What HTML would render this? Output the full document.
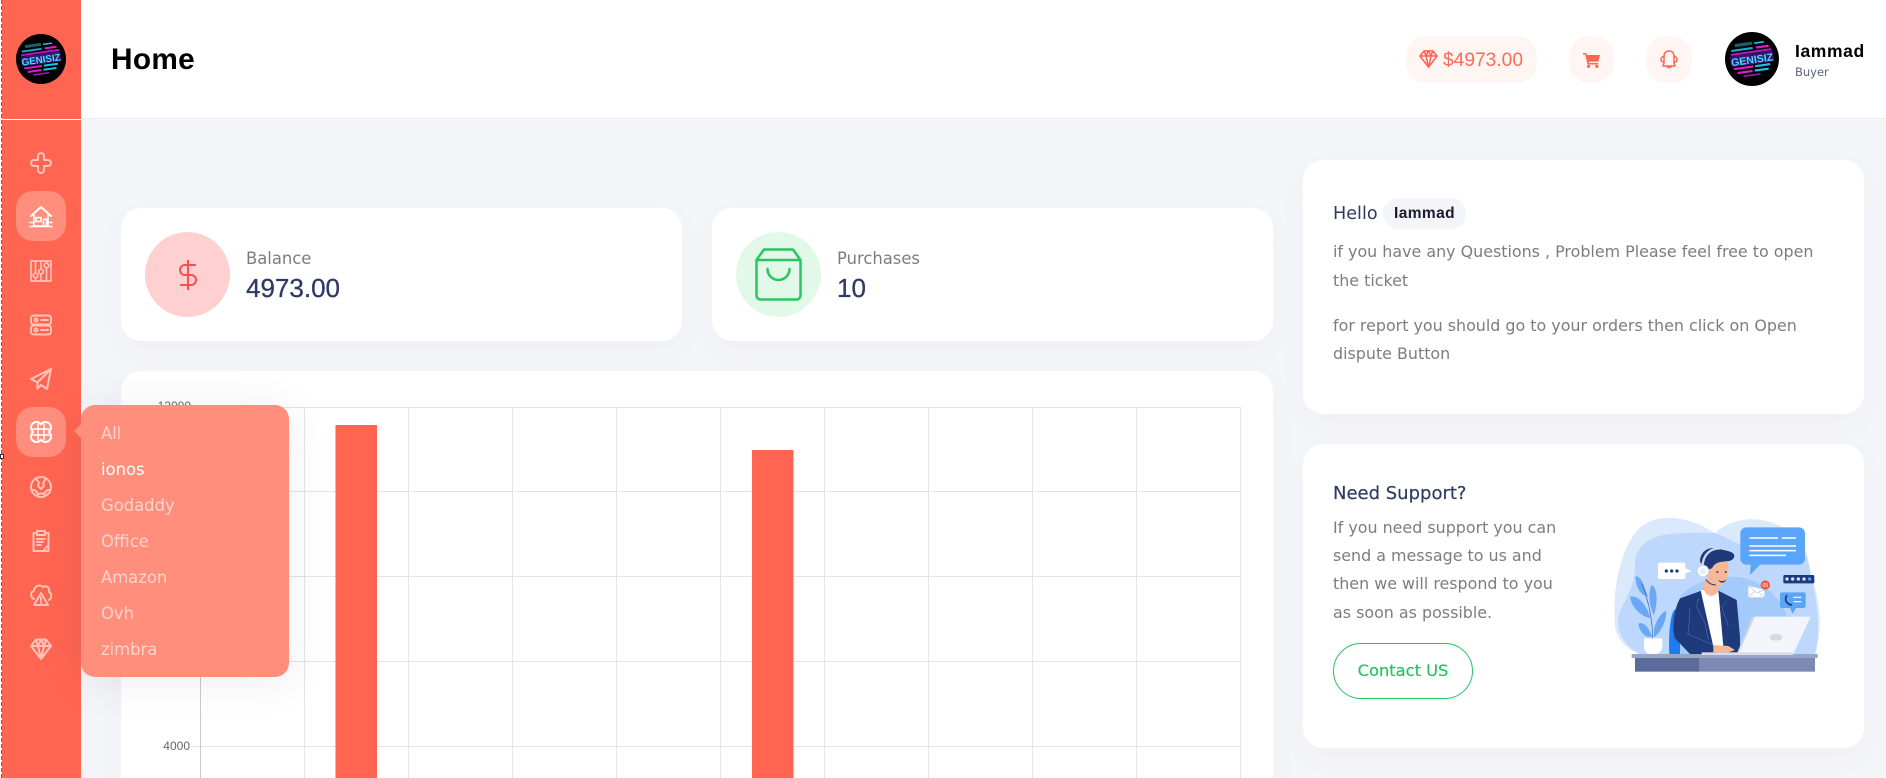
<!DOCTYPE html>
<html lang="en"><head><meta charset="utf-8"><title>Home</title>
<style>
*{box-sizing:border-box;margin:0;padding:0}
html,body{width:1886px;height:778px;overflow:hidden;background:#f4f5f9}
body{position:relative;font-family:"DejaVu Sans","Liberation Sans",sans-serif}
.a{position:absolute}
.t{position:absolute;white-space:nowrap}
.card{position:absolute;background:#fff;border-radius:20px;box-shadow:0 10px 30px rgba(82,63,105,.03)}
.ic{position:absolute;left:30px;width:22px;height:22px;fill:none;stroke:#ffc3ba;stroke-width:2;stroke-linejoin:round;stroke-linecap:round;overflow:visible}
.ic.on{stroke:#fff}
.m{position:absolute;left:101px;font-size:16.4px;line-height:20px;color:#ffd3cc;white-space:nowrap}
.b{font-size:15.9px;line-height:28px;color:#7d7d7d}
.y{font-family:"Liberation Sans",sans-serif}
</style></head><body>

<!-- left guide -->
<div class="a" style="left:0;top:0;width:2px;height:778px;background:#fff"></div>
<div class="a" style="left:1px;top:0;width:1px;height:778px;background:repeating-linear-gradient(#2a78d8 0 4px,#fff 4px 6px)"></div>

<!-- header -->
<div class="a" style="left:81px;top:0;width:1805px;height:119px;background:#fff;border-bottom:1px solid #eeeff3"></div>
<div class="t y" style="left:111px;top:39.500px;font-size:29.800px;line-height:40px;font-weight:700;color:#000;letter-spacing:.3px">Home</div>

<div class="a" style="left:1406px;top:36px;width:131px;height:47px;border-radius:20px;background:#fff5f3"></div>
<svg class="a" style="left:1419px;top:50px" width="19" height="18" viewBox="0 0 22 21" fill="none" stroke="#ff6550" stroke-width="1.800" stroke-linejoin="round"><path d="M6 1H16L21 7L11 20L1 7ZM1 7H21M6 1L8 7L11 20L14 7L16 1M8 7L11 1L14 7"/></svg>
<div class="t y" style="left:1443px;top:48px;font-size:19.200px;line-height:26px;color:#ff6b57">$4973.00</div>

<div class="a" style="left:1569px;top:36px;width:45px;height:47px;border-radius:20px;background:#fff5f3"></div>
<svg class="a" style="left:1583px;top:53px" width="17" height="15" viewBox="0 0 17 15"><path fill="#ff6550" d="M0 0H3.200L3.900 2H17L15.400 8.600H5.600L5.900 10H15.200V11.500H4.500L2.200 1.500H0Z"/><circle cx="5.600" cy="13.400" r="1.600" fill="#ff6550"/><circle cx="13.800" cy="13.400" r="1.600" fill="#ff6550"/></svg>

<div class="a" style="left:1646px;top:36px;width:46px;height:47px;border-radius:20px;background:#fff5f3"></div>
<svg class="a" style="left:1660px;top:50px" width="18" height="19" viewBox="0 0 18 19" fill="none" stroke="#ff6550" stroke-width="1.500" stroke-linecap="round" stroke-linejoin="round"><path d="M4 13V6.500C4 3 6 1 9 1s5 2 5 5.500V13l1 3H3Z"/><path d="M4 6.500C2 6.500 1 8 1 9.500S2 12 4 12M14 6.500c2 0 3 1.500 3 3S16 12 14 12M7 16.500c.5 1.500 3.500 1.500 4 0"/></svg>

<svg class="a" style="left:1725px;top:32px" width="54" height="54" viewBox="0 0 50 50"><circle cx="25" cy="25" r="25" fill="#000"/><g transform="rotate(-8 25 25)"><rect x="11" y="9" width="16" height="3" fill="#1f5e66"/><rect x="29" y="10" width="9" height="1.500" fill="#19c6ea"/><rect x="7" y="14" width="20" height="2" fill="#19a6ca"/><rect x="30" y="14" width="12" height="2" fill="#e01ad0"/><rect x="6" y="17.500" width="38" height="2" fill="#b514c8"/><rect x="5" y="20" width="40" height="10" fill="#3a1270"/><rect x="7" y="31" width="18" height="2" fill="#e01ad0"/><rect x="27" y="31" width="14" height="2" fill="#19c6ea"/><rect x="10" y="35" width="14" height="2" fill="#e01ad0"/><rect x="26" y="35" width="13" height="2" fill="#19c6ea"/><rect x="15" y="39" width="16" height="1.500" fill="#a01ac0"/><text x="25" y="29" text-anchor="middle" font-family="Liberation Sans,sans-serif" font-weight="700" font-size="9.800" fill="#3fe0ff">GENISIZ</text></g></svg>
<div class="t y" style="left:1795px;top:40px;font-size:17.500px;line-height:22px;font-weight:700;color:#000;letter-spacing:.6px">Iammad</div>
<div class="t" style="left:1795px;top:63px;font-size:11.500px;line-height:18px;color:#5d6280">Buyer</div>

<!-- sidebar -->
<div class="a" style="left:2px;top:0;width:79px;height:778px;background:#ff6550"></div>
<div class="a" style="left:2px;top:119px;width:79px;height:1px;background:#fff"></div>
<svg class="a" style="left:16px;top:34px" width="50" height="50" viewBox="0 0 50 50"><circle cx="25" cy="25" r="25" fill="#000"/><g transform="rotate(-8 25 25)"><rect x="11" y="9" width="16" height="3" fill="#1f5e66"/><rect x="29" y="10" width="9" height="1.500" fill="#19c6ea"/><rect x="7" y="14" width="20" height="2" fill="#19a6ca"/><rect x="30" y="14" width="12" height="2" fill="#e01ad0"/><rect x="6" y="17.500" width="38" height="2" fill="#b514c8"/><rect x="5" y="20" width="40" height="10" fill="#3a1270"/><rect x="7" y="31" width="18" height="2" fill="#e01ad0"/><rect x="27" y="31" width="14" height="2" fill="#19c6ea"/><rect x="10" y="35" width="14" height="2" fill="#e01ad0"/><rect x="26" y="35" width="13" height="2" fill="#19c6ea"/><rect x="15" y="39" width="16" height="1.500" fill="#a01ac0"/><text x="25" y="29" text-anchor="middle" font-family="Liberation Sans,sans-serif" font-weight="700" font-size="9.800" fill="#3fe0ff">GENISIZ</text></g></svg>

<svg class="ic" style="top:152px" viewBox="0 0 22 22"><path d="M8 4a3 3 0 0 1 6 0V8H18a3 3 0 0 1 0 6H14V18a3 3 0 0 1-6 0V14H4a3 3 0 0 1 0-6H8Z"/></svg>

<div class="a" style="left:16px;top:191px;width:50px;height:50px;border-radius:17px;background:#ff8e7d"></div>
<svg class="ic on" style="top:206px" viewBox="0 0 22 22"><path d="M1 10L11 1L21 10"/><path stroke-width="1.600" d="M4 9V20H18V9M6 11.500H11V15.500H6ZM13.500 20V13H16.500V20M0 20.500H22M0 16.500H3M19 16.500H22"/></svg>

<svg class="ic" style="top:260px;stroke-width:1.700" viewBox="0 0 22 22"><rect x="1" y="1" width="20" height="20"/><path d="M5.500 1V13M5.500 18V21M11 1V9M11 14V21M16.500 1V3M16.500 8V21"/><circle cx="5.500" cy="15.500" r="2.300"/><circle cx="11" cy="11.500" r="2.300"/><circle cx="16.500" cy="5.500" r="2.300"/></svg>

<svg class="ic" style="top:314px" viewBox="0 0 22 22"><rect x="1" y="1.500" width="20" height="9" rx="3"/><rect x="1" y="11.500" width="20" height="9" rx="3"/><circle cx="6" cy="6" r="1.500"/><circle cx="6" cy="16" r="1.500"/><path d="M11 6H18M11 16H18"/></svg>

<svg class="ic" style="top:368px" viewBox="0 0 22 22"><path d="M21 1L1 11L7.500 14.500L21 1L17 21L11 17L7.500 20.500V14.500"/></svg>

<div class="a" style="left:16px;top:407px;width:50px;height:50px;border-radius:17px;background:#ff8e7d"></div>
<svg class="ic on" style="top:421px" viewBox="0 0 22 22"><path d="M11 3.340A5.500 5.500 0 1 1 18.660 11A5.500 5.500 0 1 1 11 18.660A5.500 5.500 0 1 1 3.340 11A5.500 5.500 0 1 1 11 3.340Z"/><path stroke-width="1.500" d="M8 3V19M14 3V19M3 8H19M3 14H19"/></svg>

<svg class="ic" style="top:476px" viewBox="0 0 22 22"><circle cx="11" cy="11" r="10"/><path d="M6 2.500L9 7L8 10L11 13L14 10L13 7L16 2.500M2 14C5 13.500 7 16 8 18.500C10 17 12 17 14 18.500C15 16 17 13.500 20 14"/></svg>

<svg class="ic" style="top:530px" viewBox="0 0 22 22"><path d="M7 3H3.500V21H18.500V3H15M7 1H15V5H7ZM7 9H15M7 12H13M7 15H11M13 21L18.500 15"/></svg>

<svg class="ic" style="top:584px" viewBox="0 0 22 22"><path d="M4 15C0 13 0 8 4 7C4 2 10 0 13 3C17 1 20 4 19 8C22 9 22 14 19 16"/><path d="M11 9L4 21H18ZM11 13.500V16.500M11 18.500V19"/></svg>

<svg class="ic" style="top:638px" viewBox="0 0 22 22"><path d="M6 1.500H16L21 8L11 21L1 8ZM1 8H21M6 1.500L8 8L11 21L14 8L16 1.500M8 8L11 1.500L14 8"/></svg>

<!-- stat cards -->
<div class="card" style="left:121px;top:208px;width:561px;height:133px"></div>
<div class="a" style="left:145px;top:232px;width:85px;height:85px;border-radius:50%;background:#ffd0d0"></div>
<svg class="a" style="left:179px;top:260px" width="18" height="30" viewBox="0 0 18 30" fill="none" stroke="#ff4d4f" stroke-width="2"><path d="M9 0V30M17 5H6A5 5 0 0 0 6 15H12A5 5 0 0 1 12 25H1"/></svg>
<div class="t" style="left:246px;top:249px;font-size:16.400px;line-height:20px;color:#7d7d7d">Balance</div>
<div class="t y" style="left:246px;top:270px;font-size:26px;line-height:36px;color:#2f3a63;-webkit-text-stroke:.3px #2f3a63">4973.00</div>

<div class="card" style="left:712px;top:208px;width:561px;height:133px"></div>
<div class="a" style="left:736px;top:232px;width:85px;height:85px;border-radius:50%;background:#e2f8e8"></div>
<svg class="a" style="left:755px;top:248px" width="47" height="53" viewBox="0 0 47 53" fill="none" stroke="#2cc45e" stroke-width="2.500" stroke-linejoin="round" stroke-linecap="round"><path d="M1.500 12V47.500a4 4 0 0 0 4 4H41.500a4 4 0 0 0 4-4V12ZM1.500 12L9 1.500H38L45.500 12M12.500 21a11 11 0 0 0 22 0"/></svg>
<div class="t" style="left:837px;top:249px;font-size:16.400px;line-height:20px;color:#7d7d7d">Purchases</div>
<div class="t y" style="left:837px;top:270px;font-size:26px;line-height:36px;color:#2f3a63;-webkit-text-stroke:.3px #2f3a63">10</div>

<!-- chart -->
<div class="card" style="left:121px;top:371px;width:1152px;height:440px"></div>
<svg class="a" style="left:121px;top:371px" width="1152" height="407" viewBox="121 371 1152 407">
<g stroke="#e3e4e7" stroke-width="1">
<path d="M193 407.500H1240M193 491.500H1240M193 576.500H1240M193 661.500H1240M193 746.500H1240"/>
<path d="M304.500 407V778M408.500 407V778M512.500 407V778M616.500 407V778M720.500 407V778M824.500 407V778M928.500 407V778M1032.500 407V778M1136.500 407V778M1240.500 407V778"/>
</g>
<path d="M200.500 407V778" stroke="#c9cacd"/>
<rect x="335.500" y="425" width="41.500" height="353" fill="#ff6550"/>
<rect x="752" y="450" width="41.500" height="328" fill="#ff6550"/>
<text x="191" y="410" text-anchor="end" font-family="Liberation Sans,sans-serif" font-size="12" fill="#666">12000</text>
<text x="190" y="750" text-anchor="end" font-family="Liberation Sans,sans-serif" font-size="12" fill="#666">4000</text>
</svg>

<!-- popup -->
<div class="a" style="left:81px;top:405px;width:208px;height:272px;border-radius:14px;background:#ff8e7d;box-shadow:0 5px 40px rgba(82,63,105,.1)"></div>
<div class="a" style="left:74px;top:424px;width:0;height:0;border-top:7px solid transparent;border-bottom:7px solid transparent;border-right:7px solid #ff8e7d"></div>
<div class="m" style="top:424px">All</div>
<div class="m" style="top:460px;color:#fff">ionos</div>
<div class="m" style="top:496px">Godaddy</div>
<div class="m" style="top:532px">Office</div>
<div class="m" style="top:568px">Amazon</div>
<div class="m" style="top:604px">Ovh</div>
<div class="m" style="top:640px">zimbra</div>

<!-- hello card -->
<div class="card" style="left:1303px;top:160px;width:561px;height:254px"></div>
<div class="t" style="left:1333px;top:202px;font-size:17.600px;line-height:24px;color:#2f3a63">Hello</div>
<div class="a" style="left:1383px;top:198px;width:83px;height:31px;border-radius:16px;background:#f4f5f9"></div>
<div class="t y" style="left:1383px;width:83px;text-align:center;top:204px;font-size:15.500px;line-height:20px;font-weight:700;color:#1a1a2e;letter-spacing:.4px">Iammad</div>
<div class="t b" style="left:1333px;top:238px">if you have any Questions , Problem Please feel free to open</div>
<div class="t b" style="left:1333px;top:267px">the ticket</div>
<div class="t b" style="left:1333px;top:312px">for report you should go to your orders then click on Open</div>
<div class="t b" style="left:1333px;top:340px">dispute Button</div>

<!-- support card -->
<div class="card" style="left:1303px;top:444px;width:561px;height:304px"></div>
<div class="t" style="left:1333px;top:482px;font-size:18px;line-height:24px;color:#2f3a63;-webkit-text-stroke:.2px #2f3a63">Need Support?</div>
<div class="t b" style="left:1333px;top:514px">If you need support you can</div>
<div class="t b" style="left:1333px;top:542px">send a message to us and</div>
<div class="t b" style="left:1333px;top:570px">then we will respond to you</div>
<div class="t b" style="left:1333px;top:599px">as soon as possible.</div>
<div class="a" style="left:1333px;top:643px;width:140px;height:56px;border:1px solid #22c55e;border-radius:28px;background:#fff"></div>
<div class="t" style="left:1333px;width:140px;text-align:center;top:660px;font-size:16.300px;line-height:22px;color:#22c55e;-webkit-text-stroke:.2px #22c55e">Contact US</div>

<!-- illustration -->
<svg class="a" style="left:1580px;top:490px" width="260" height="200" viewBox="0 0 780 600">
<path fill="#dbe9fd" d="M105 400C95 300 125 150 190 105C250 65 340 85 405 130C450 85 540 70 610 115C680 160 690 210 690 250C720 320 730 420 705 492H175C130 470 105 440 105 400Z"/>
<path fill="#bdd8fc" d="M165 215C170 160 225 130 300 130C350 128 390 125 415 132C470 160 500 175 560 180L680 200C700 280 730 400 705 492H180C130 470 110 420 115 380C125 340 170 290 165 215Z"/>
<path fill="#a4cafb" d="M300 320C340 270 430 250 500 265C560 285 610 330 625 392L640 492H300Z"/>
<path fill="#5aa5f9" d="M500 112H657a18 18 0 0 1 18 18V206a18 18 0 0 1-18 18H540L510 255L512 224H499a18 18 0 0 1-18-18V130a18 18 0 0 1 18-18Z"/>
<path stroke="#fff" stroke-width="4.500" fill="none" d="M508 144H594M605 144H648M508 168H648M508 182H648M508 196H618"/>
<path fill="#fff" d="M240 218H310a6 6 0 0 1 6 6V235L335 243L316 250V261a6 6 0 0 1-6 6H240a6 6 0 0 1-6-6V224a6 6 0 0 1 6-6Z"/>
<circle cx="259" cy="243" r="5" fill="#1f3a7a"/><circle cx="275" cy="243" r="5" fill="#1f3a7a"/><circle cx="291" cy="243" r="5" fill="#1f3a7a"/>
<rect x="610" y="255" width="93" height="25" rx="4" fill="#1f3a7a"/>
<g fill="#d8e6fb"><circle cx="621" cy="267" r="5"/><circle cx="638" cy="267" r="5"/><circle cx="655" cy="267" r="5"/><circle cx="672" cy="267" r="5"/></g><circle cx="689" cy="267" r="5" fill="#5aa5f9"/>
<path fill="#5aa5f9" d="M606 307H671a6 6 0 0 1 6 6V348a6 6 0 0 1-6 6H648L638 371L630 354H606a6 6 0 0 1-6-6V313a6 6 0 0 1 6-6Z"/>
<path stroke="#1f3a7a" stroke-width="5" fill="none" stroke-linecap="round" d="M620 317C612 330 620 342 634 345"/>
<path stroke="#fff" stroke-width="3.500" fill="none" d="M640 322H664M640 335H664"/>
<path fill="#fff" d="M505 287L553 300V322H505Z"/><path stroke="#b9c7dd" stroke-width="2" fill="none" d="M505 287L530 308L553 300M505 322L524 304M553 322L535 306"/>
<circle cx="556" cy="285" r="14" fill="#ef5a3c"/><text x="556" y="291" text-anchor="middle" font-size="15" font-family="Liberation Sans,sans-serif" fill="#fff">05</text>
<!-- plant -->
<g fill="#6aa8f5">
<path d="M167 258C190 262 192 295 205 320C192 320 165 300 167 258Z"/>
<path d="M150 320C175 315 200 345 212 385C185 380 155 355 150 320Z"/>
<path d="M215 285C235 295 232 345 222 375C205 345 205 305 215 285Z"/>
<path d="M175 400C195 395 210 420 216 440C195 445 178 425 175 400Z"/>
<path d="M258 362C262 390 240 430 222 442C218 410 235 375 258 362Z"/>
</g>
<path stroke="#3b5fa8" stroke-width="2" fill="none" d="M185 280C205 330 218 390 218 445"/>
<path fill="#fff" d="M192 445H247V470C245 485 235 492 225 492H212C200 492 193 485 192 470Z"/>
<!-- chair / body -->
<path fill="#1e7cf0" d="M285 358C270 370 265 440 268 492H300V358Z"/>
<path fill="#1f3a7a" d="M370 300L300 325C280 360 275 420 285 445L330 492H480L480 440L470 330L415 302Z"/>
<path fill="#fff" d="M362 300L415 302L430 470H400C385 400 370 340 362 300Z"/>
<path fill="#f8b898" d="M372 270L415 275L415 305C400 325 380 320 372 300Z"/>
<path stroke="#5f7ab5" stroke-width="1.500" fill="none" d="M355 325L350 350L375 400L385 450M330 355L325 430M318 430L400 465M440 335L425 350L445 410"/>
<path fill="#f8b898" d="M400 465L445 468L465 480L445 487H400Z"/>
<path fill="#f8b898" d="M385 210H440C450 225 448 275 425 285C405 290 385 275 378 250Z"/>
<circle cx="412" cy="246" r="3" fill="#1f3a7a"/><circle cx="437" cy="246" r="3" fill="#1f3a7a"/>
<path fill="#1f3a7a" d="M415 270C423 275 431 275 437 268C436 280 420 282 415 270Z"/>
<path fill="#1f3a7a" d="M360 215C360 185 385 170 410 175C425 180 440 180 455 187C470 195 462 210 447 213C425 215 410 215 400 228C395 240 385 238 375 235Z"/>
<path stroke="#cfd6e6" stroke-width="7" fill="none" d="M368 230C368 195 390 175 420 175"/>
<circle cx="369" cy="243" r="17" fill="#fff" stroke="#cfd6e6" stroke-width="3"/><circle cx="369" cy="243" r="9" fill="#e8edf5"/>
<path stroke="#1f3a7a" stroke-width="3" fill="none" d="M378 268C385 280 395 285 408 285"/>
<!-- laptop -->
<path fill="#cfd4e2" d="M516 380H530L480 492H470Z"/>
<path fill="#f3f5fa" d="M525 380H692L640 492H475Z"/>
<ellipse cx="588" cy="442" rx="19" ry="10" fill="#d4d8e2"/>
<!-- desk -->
<rect x="155" y="492" width="558" height="12" fill="#9aa5c4"/>
<rect x="365" y="487" width="275" height="8" fill="#d8dcea"/>
<rect x="165" y="504" width="192" height="41" fill="#5a6b9c"/>
<rect x="357" y="504" width="348" height="41" fill="#7b89b3"/>
</svg>

<!-- handle -->
<div class="a" style="left:0;top:454px;width:4px;height:5px;background:#fff;border:1px solid #333"></div>
</body></html>
